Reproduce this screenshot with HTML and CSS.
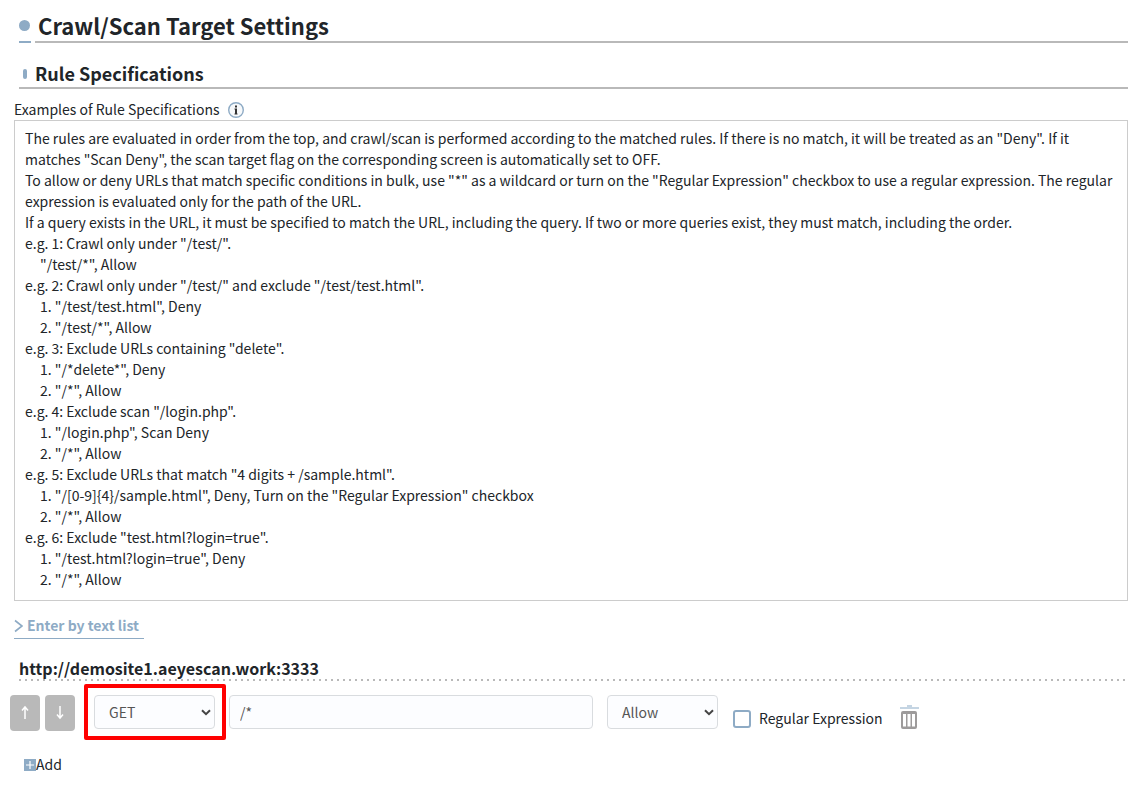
FILE: index.html
```html
<!DOCTYPE html>
<html lang="en">
<head>
<meta charset="utf-8">
<title>Crawl/Scan Target Settings</title>
<link rel="stylesheet" href="styles.css">
</head>
<body>
<main class="page">
  <h1 class="title"><span class="title-mark"></span><span class="title-text">Crawl/Scan Target Settings</span></h1>
  <h2 class="subtitle">Rule Specifications</h2>
  <div class="caption">
    <span>Examples of Rule Specifications</span>
    <svg class="info" viewBox="0 0 16 16" aria-hidden="true">
      <circle cx="8" cy="8" r="7.3" fill="#f7f9fb" stroke="#8eabc5" stroke-width="1.4"/>
      <path d="M7 3.600h2v2H7zM6.500 6.600H9v5h.5v.9h-3v-.9H7v-4h-.5z" fill="#333"/>
    </svg>
  </div>
  <section class="examples">
    <p>The rules are evaluated in order from the top, and crawl/scan is performed according to the matched rules. If there is no match, it will be treated as an "Deny". If it matches "Scan Deny", the scan target flag on the corresponding screen is automatically set to OFF.</p>
    <p>To allow or deny URLs that match specific conditions in bulk, use "*" as a wildcard or turn on the "Regular Expression" checkbox to use a regular expression. The regular expression is evaluated only for the path of the URL.</p>
    <p>If a query exists in the URL, it must be specified to match the URL, including the query. If two or more queries exist, they must match, including the order.</p>
    <p>e.g. 1: Crawl only under "/test/".</p>
    <p class="rule">"/test/*", Allow</p>
    <p>e.g. 2: Crawl only under "/test/" and exclude "/test/test.html".</p>
    <p class="rule">1. "/test/test.html", Deny</p>
    <p class="rule">2. "/test/*", Allow</p>
    <p>e.g. 3: Exclude URLs containing "delete".</p>
    <p class="rule">1. "/*delete*", Deny</p>
    <p class="rule">2. "/*", Allow</p>
    <p>e.g. 4: Exclude scan "/login.php".</p>
    <p class="rule">1. "/login.php", Scan Deny</p>
    <p class="rule">2. "/*", Allow</p>
    <p>e.g. 5: Exclude URLs that match "4 digits + /sample.html".</p>
    <p class="rule">1. "/[0-9]{4}/sample.html", Deny, Turn on the "Regular Expression" checkbox</p>
    <p class="rule">2. "/*", Allow</p>
    <p>e.g. 6: Exclude "test.html?login=true".</p>
    <p class="rule">1. "/test.html?login=true", Deny</p>
    <p class="rule">2. "/*", Allow</p>
  </section>
  <a class="text-list" href="#">
    <svg class="chevron" viewBox="0 0 9 14" aria-hidden="true"><path d="M1 1.5 8 7 1 12.5" fill="none" stroke="#8eabc5" stroke-width="1.6"/></svg>
    <span>Enter by text list</span>
  </a>
  <h3 class="host">http://demosite1.aeyescan.work:3333</h3>
  <div class="rule-row">
    <div class="order">
      <button class="move" type="button" aria-label="Move up"><svg viewBox="0 0 10 16" aria-hidden="true"><path d="M5 14V2M2 5.500 5 2l3 3.500" fill="none" stroke="#fff" stroke-width="1.500"/></svg></button>
      <button class="move" type="button" aria-label="Move down"><svg viewBox="0 0 10 16" aria-hidden="true"><path d="M5 1v12M2 9.500 5 13l3-3.500" fill="none" stroke="#fff" stroke-width="1.500"/></svg></button>
    </div>
    <div class="select-wrap method highlighted">
      <select class="field" aria-label="Method"><option>GET</option><option>POST</option></select>
      <svg class="caret" viewBox="0 0 10 7" aria-hidden="true"><path d="M1 1.200 5 5.200 9 1.200" fill="none" stroke="#444" stroke-width="2"/></svg>
    </div>
    <input class="field path" type="text" value="/*" aria-label="Path">
    <div class="select-wrap action">
      <select class="field" aria-label="Action"><option>Allow</option><option>Deny</option><option>Scan Deny</option></select>
      <svg class="caret" viewBox="0 0 10 7" aria-hidden="true"><path d="M1 1.200 5 5.200 9 1.200" fill="none" stroke="#444" stroke-width="2"/></svg>
    </div>
    <label class="check"><input class="box" type="checkbox"><span>Regular Expression</span></label>
    <button class="trash" type="button" aria-label="Delete">
      <svg viewBox="0 0 19 24" aria-hidden="true">
        <path d="M7 0h5v2h7v2H0V2h7z" fill="#c5d5e3"/>
        <path fill-rule="evenodd" d="M3 6h12a2 2 0 0 1 2 2v14a2 2 0 0 1-2 2H3a2 2 0 0 1-2-2V8a2 2 0 0 1 2-2zM3 9v12.500h3V9zM7.500 9v12.500h3V9zM12 9v12.500h3V9z" fill="#9d9b9b"/>
      </svg>
    </button>
  </div>
  <button class="add" type="button">
    <svg class="plus" viewBox="0 0 12 12" aria-hidden="true"><path d="M0 0h12v12H0z" fill="#8eabc5"/><path d="M6 2v8M2 6h8" stroke="#fff" stroke-width="1.200"/></svg>
    <span>Add</span>
  </button>
</main>
</body>
</html>
```

FILE: styles.css
```css
* { box-sizing: border-box; }
body {
  margin: 0;
  background: #fff;
  color: #212529;
  font: 14px/21px "Noto Sans CJK JP", "Noto Sans", sans-serif;
}
button, input, select { font: inherit; }
button { border: 0; padding: 0; background: none; color: inherit; }
svg { display: block; }
h1, h2, h3, p { margin: 0; }

.page { padding: 9px 10px 0 14px; }

.title { display: flex; gap: 4px; margin-left: 5px; font-size: 22px; line-height: 32px; }
.title-mark { display: flex; align-items: center; width: 12px; border-bottom: 2px solid #8eabc5; }
.title-mark::before { content: ""; width: 11px; height: 11px; border-radius: 50%; background: #8eabc5; }
.title-text { flex: 1; padding-left: 3px; border-bottom: 2px solid #b9b9b9; }

.subtitle {
  display: flex;
  align-items: center;
  gap: 8px;
  margin: 18px 0 0 5px;
  padding: 0 0 1px 4px;
  border-bottom: 2px solid #b9b9b9;
  font-size: 18px;
  line-height: 25px;
}
.subtitle::before { content: ""; width: 4px; height: 10px; border-radius: 2px; background: #8eabc5; }

.caption { display: flex; align-items: center; gap: 8px; margin-top: 10px; }
.info { width: 16px; height: 16px; }

.examples { padding: 7px 10px 10px; border: 1px solid #ccc; }
.rule { padding-left: 15px; }

.text-list {
  display: inline-flex;
  align-items: center;
  gap: 4px;
  margin-top: 14px;
  padding: 0 5px 2px 0;
  border-bottom: 1px solid #8eabc5;
  color: #8eabc5;
  font-weight: 700;
  text-decoration: none;
}
.chevron { width: 9px; height: 14px; }

.host {
  margin: 18px 0 0 5px;
  padding-bottom: 2px;
  background: repeating-linear-gradient(to right, #b9b9b9 0 2px, transparent 2px 6px) left bottom / 100% 2px no-repeat;
  font-size: 16px;
  line-height: 22px;
}

.rule-row { display: flex; gap: 14px; margin: 14px 0 0 -4px; }
.order { display: flex; gap: 5px; margin-right: 5px; }
.move {
  display: flex;
  justify-content: center;
  align-items: center;
  width: 30px;
  height: 36px;
  border-radius: 4px;
  background: #b9b9b9;
}
.move svg { width: 10px; height: 16px; }
.field {
  width: 100%;
  height: 34px;
  border: 1px solid #d9dcdf;
  border-radius: 4px;
  background: #fcfdff;
  color: #555;
}
.select-wrap { position: relative; }
.select-wrap .field { padding: 0 14px; appearance: none; }
.method { width: 121px; }
.action { width: 111px; }
.caret { position: absolute; top: 14px; right: 4px; width: 10px; height: 7px; pointer-events: none; }
.highlighted::after {
  content: "";
  position: absolute;
  inset: -11px -11px -9px -10px;
  border: 4px solid #f00;
  border-radius: 2px;
  pointer-events: none;
}
.path { flex: 0 1 364px; min-width: 0; padding: 0 10px; }
.check { display: flex; align-items: center; gap: 8px; height: 21px; margin: 13px 0 0 1px; }
.box { appearance: none; width: 18px; height: 18px; margin: 0; border: 2px solid #8eabc5; border-radius: 3px; background: #fff; }
.trash { width: 19px; height: 24px; margin: 10px 0 0 3px; }

.add { display: flex; align-items: center; margin: 23px 0 0 10px; }
.plus { width: 12px; height: 12px; }
```
